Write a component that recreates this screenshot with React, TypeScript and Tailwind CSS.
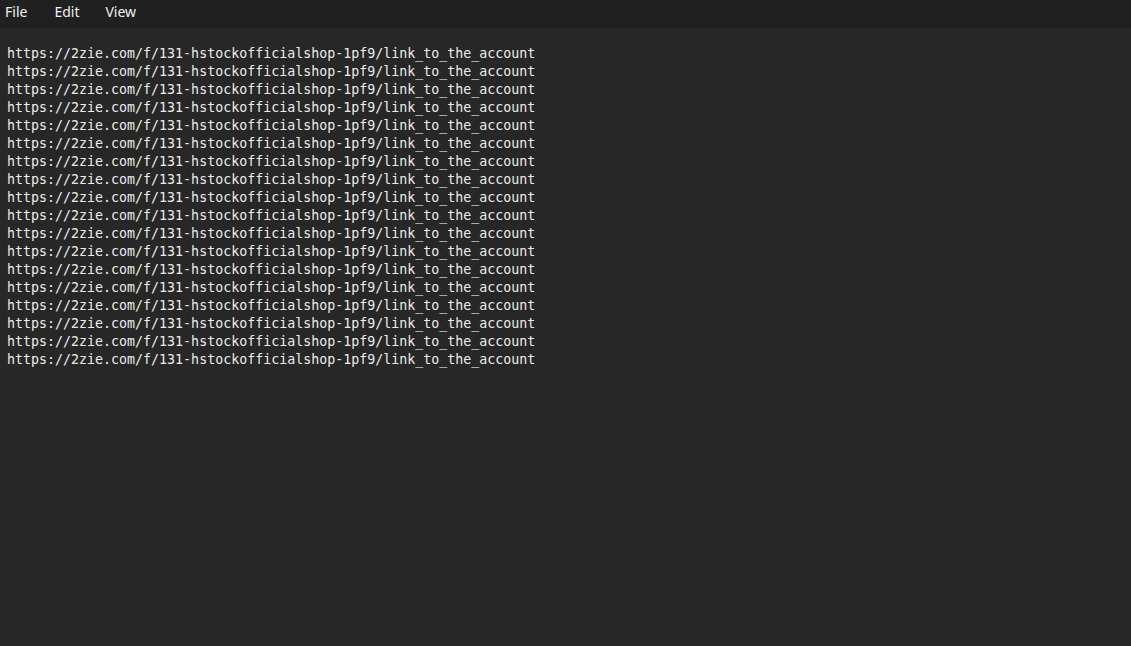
import React from 'react';

const LINE = 'https://2zie.com/f/131-hstockofficialshop-1pf9/link_to_the_account';
const lines = Array.from({ length: 18 }, () => LINE);

const App: React.FC = () => {
  return (
    <div className="w-[1131px] h-[646px] bg-[#272727] flex flex-col overflow-hidden">
      <div className="h-[28px] bg-[#202020] flex items-start pt-[3px] text-[14px] leading-[18px] text-[#f0f0f0] font-['Noto_Sans',sans-serif]">
        <span className="ml-[5px]">File</span>
        <span className="ml-[27px]">Edit</span>
        <span className="ml-[26px]">View</span>
      </div>
      <div className="pt-[17px] pl-[7px] font-['DejaVu_Sans_Mono',monospace] text-[13.3px] leading-[18px] text-[#ececec]">
        {lines.map((l, i) => (
          <div key={i}>{l}</div>
        ))}
      </div>
    </div>
  );
};

export default App;
